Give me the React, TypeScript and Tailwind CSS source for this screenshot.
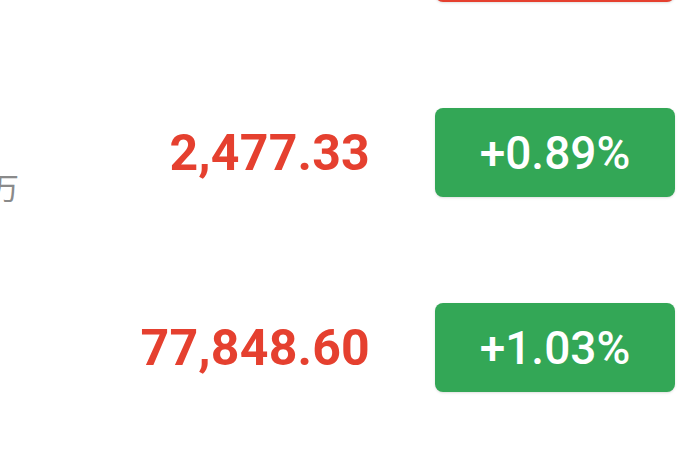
const rows = [
  { value: '3,512.48', change: '-0.42%', up: false, sub: '' },
  { value: '2,477.33', change: '+0.89%', up: true, sub: '成交额 8,421万' },
  { value: '77,848.60', change: '+1.03%', up: true, sub: '' },
];

export default function App() {
  return (
    <div className="w-[687px] h-[449px] overflow-hidden bg-white font-['Roboto','Noto_Sans_CJK_SC',sans-serif]">
      <div className="mt-[-140px] flex flex-col">
        {rows.map((row) => (
          <div key={row.value} className="flex h-[195px] items-center">
            {/* Left label column, scrolled mostly out of view */}
            <div className="flex h-full w-[19px] flex-col items-end justify-center overflow-hidden">
              <div className="h-[30px]" />
              <div className="mt-[42px] whitespace-nowrap text-[30px] leading-[30px] text-[#8a8a8a]">
                {row.sub}
              </div>
            </div>
            <div className="flex-1 text-right text-[50px] font-bold leading-none tracking-[0.2px] text-[#e5402f]">
              {row.value}
            </div>
            <div
              className={
                row.up
                  ? 'ml-[65px] mr-[12px] flex h-[89px] w-[240px] items-center justify-center rounded-[8px] bg-[#33a756] text-[46px] font-medium leading-none text-white shadow-sm'
                  : 'ml-[65px] mr-[12px] flex h-[89px] w-[240px] items-center justify-center rounded-[8px] bg-[#e5402f] text-[46px] font-medium leading-none text-white shadow-sm'
              }
            >
              {row.change}
            </div>
          </div>
        ))}
      </div>
    </div>
  );
}
